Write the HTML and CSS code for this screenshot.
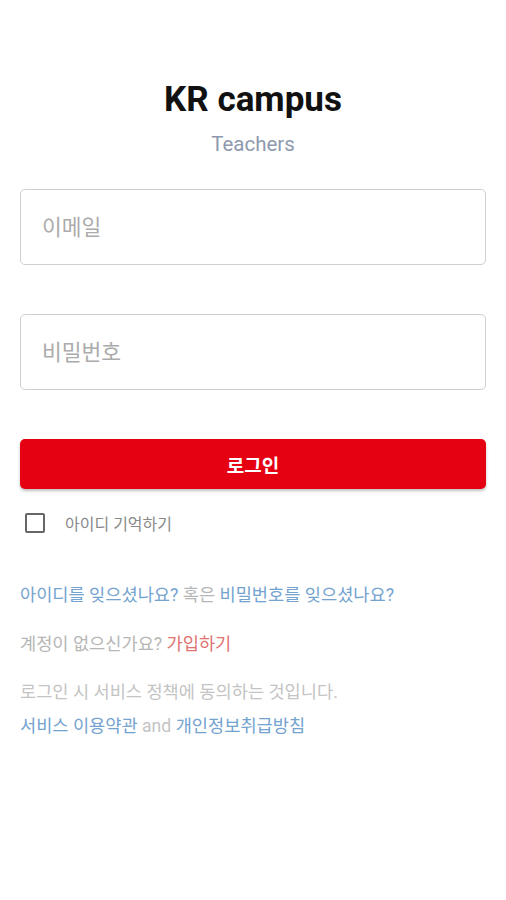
FILE: index.html
```html
<!DOCTYPE html>
<html lang="ko">
<head>
<meta charset="utf-8">
<title>KR campus</title>
<link rel="stylesheet" href="styles.css">
</head>
<body>
<main class="page">
  <header class="brand">
    <h1 class="brand-title">KR campus</h1>
    <p class="brand-sub">Teachers</p>
  </header>
  <form class="form">
    <div class="field"><input class="input" type="email" placeholder="이메일"></div>
    <div class="field"><input class="input" type="password" placeholder="비밀번호"></div>
    <button class="btn" type="button">로그인</button>
    <label class="remember"><span class="box"></span><span class="remember-text">아이디 기억하기</span></label>
  </form>
  <p class="line line-forgot"><a class="link">아이디를 잊으셨나요?</a> <span class="muted">혹은</span> <a class="link">비밀번호를 잊으셨나요?</a></p>
  <p class="line line-signup"><span class="muted">계정이 없으신가요?</span> <a class="link-red">가입하기</a></p>
  <div class="terms">
    <p class="line muted2">로그인 시 서비스 정책에 동의하는 것입니다.</p>
    <p class="line"><a class="link">서비스 이용약관</a> <span class="muted2">and</span> <a class="link">개인정보취급방침</a></p>
  </div>
</main>
</body>
</html>
```
FILE: styles.css
```css
* { box-sizing: border-box; }
html, body { margin: 0; padding: 0; background: #fff; }
body { font-family: Roboto, "Noto Sans CJK KR", sans-serif; }
.page { padding: 80px 20px 0; display: flex; flex-direction: column; }
.brand { text-align: center; }
.brand-title { margin: 0; font-size: 35px; font-weight: 700; color: #111; line-height: 40px; }
.brand-sub { margin: 12px 0 0; font-size: 20.5px; color: #8e99ad; line-height: 24px; }
.form { margin-top: 33px; display: flex; flex-direction: column; }
.field { margin-bottom: 49px; }
.input { width: 100%; height: 76px; border: 1px solid #cfcfcf; border-radius: 5px; padding: 0 21px; font-size: 21.5px; font-family: Roboto, "Noto Sans CJK KR", sans-serif; color: #333; outline: none; background: #fff; }
.input::placeholder { color: #ababab; }
.btn { height: 50px; border: none; border-radius: 5px; background: #e50012; color: #fff; font-size: 19px; font-weight: 700; font-family: Roboto, "Noto Sans CJK KR", sans-serif; box-shadow: 0 2px 3px rgba(0,0,0,0.25); }
.remember { display: flex; align-items: center; margin-top: 24px; padding-left: 5px; height: 20px; }
.box { width: 20px; height: 20px; border: 2px solid #666; border-radius: 2px; }
.remember-text { margin-left: 20px; font-size: 16px; color: #8a8a8a; }
.line { margin: 0; font-size: 17.6px; line-height: 24px; }
.line-forgot { margin-top: 50px; }
.line-signup { margin-top: 25px; }
.terms { margin-top: 24px; display: flex; flex-direction: column; gap: 10px; }
.link { color: #74a3d0; }
.link-red { color: #e07272; }
.muted { color: #b6b6b6; }
.muted2 { color: #c4c4c4; }
```
